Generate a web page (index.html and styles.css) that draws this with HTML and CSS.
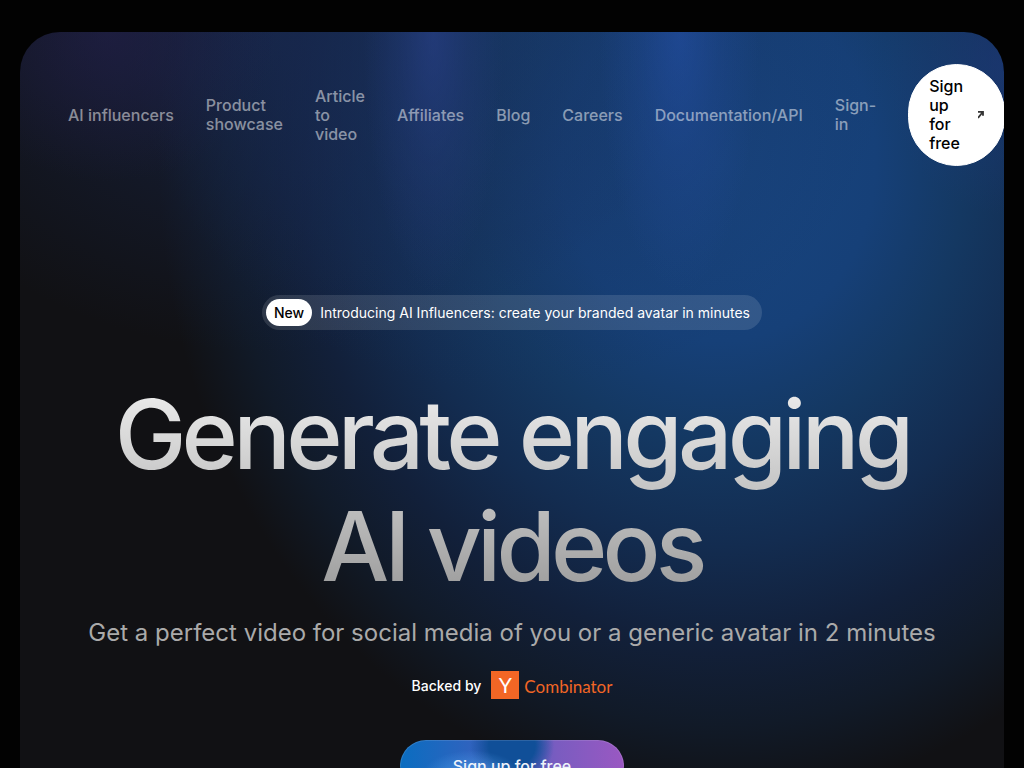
FILE: index.html
```html
<!DOCTYPE html>
<html lang="en">
<head>
  <meta charset="UTF-8">
  <meta name="viewport" content="width=device-width, initial-scale=1.0">
  <title>Generate engaging AI videos</title>
  <link rel="stylesheet" href="styles.css">
</head>
<body>
  <div class="hero">
    <nav class="nav">
      <a href="#" class="nav-link nowrap">AI influencers</a>
      <a href="#" class="nav-link">Product showcase</a>
      <a href="#" class="nav-link">Article to video</a>
      <a href="#" class="nav-link">Affiliates</a>
      <a href="#" class="nav-link">Blog</a>
      <a href="#" class="nav-link">Careers</a>
      <a href="#" class="nav-link">Documentation/API</a>
      <a href="#" class="nav-link">Sign-in</a>
      <a href="#" class="nav-signup">
        <span>Sign up for free</span>
        <svg class="arrow" width="6" height="12" viewBox="0 0 6 12" fill="none" stroke="#333" stroke-width="1.8">
          <path d="M0 2.8h5v4M5 2.8L0 9"/>
        </svg>
      </a>
    </nav>

    <main class="content">
      <a href="#" class="announce">
        <span class="badge">New</span>
        <span>Introducing AI Influencers: create your branded avatar in minutes</span>
      </a>
      <h1 class="title">Generate engaging<br>AI videos</h1>
      <p class="subtitle">Get a perfect video for social media of you or a generic avatar in 2 minutes</p>
      <div class="backed">
        <span>Backed by</span>
        <span class="yc">
          <span class="yc-mark">Y</span>
          <span class="yc-name">Combinator</span>
        </span>
      </div>
      <button type="button" class="cta">Sign up for free</button>
    </main>
  </div>
</body>
</html>
```

FILE: styles.css
```css
* {
  box-sizing: border-box;
}

body {
  margin: 0;
  padding: 32px 20px 0;
  background-color: #020202;
  color: #fff;
  font-family: Inter, sans-serif;
  font-size: 16px;
}

a {
  color: inherit;
  text-decoration: none;
}

.hero {
  overflow: hidden;
  padding-bottom: 64px;
  border-radius: 40px;
  background-color: #111114;
  background-image:
    radial-gradient(70px 260px at 42% 0, rgba(42, 65, 140, 0.6), rgba(42, 65, 140, 0.25) 50%, transparent),
    radial-gradient(80px 260px at 67% 0, rgba(35, 78, 165, 0.6), rgba(35, 78, 165, 0.25) 50%, transparent),
    radial-gradient(170px 150px at 9% 0, rgba(38, 32, 80, 0.5), transparent),
    radial-gradient(120px 150px at 100% 4%, rgba(32, 58, 130, 0.5), transparent),
    radial-gradient(420px 320px at 26% 0, rgba(24, 40, 80, 0.7), transparent),
    radial-gradient(380px 360px at 50% 0, rgba(24, 62, 112, 0.5), rgba(24, 50, 96, 0.3) 55%, transparent),
    radial-gradient(560px 640px at 71% 130px, #184580 0%, #164078 28%, #143862 44%, #132c50 60%, #12203a 75%, #111a28 88%, transparent 100%);
}

/* navigation */
.nav {
  display: flex;
  align-items: center;
  gap: 32px;
  padding: 32px 48px 0;
  font-weight: 500;
  line-height: 19px;
}

.nav-link {
  color: rgba(255, 255, 255, 0.5);
}

.nowrap {
  white-space: nowrap;
}

.nav-signup {
  display: flex;
  align-items: center;
  gap: 15px;
  padding: 12px 20px;
  border: 1px solid #fff;
  border-radius: 999px;
  background-color: #fff;
  color: #000;
}

.arrow {
  flex-shrink: 0;
}

/* hero content */
.content {
  display: flex;
  flex-direction: column;
  align-items: center;
  margin-top: 129px;
  text-align: center;
}

.announce {
  display: flex;
  align-items: center;
  gap: 8px;
  padding: 4px 12px 4px 4px;
  border-radius: 999px;
  background-color: rgba(255, 255, 255, 0.12);
  font-size: 14px;
}

.badge {
  padding: 5px 8px;
  border-radius: 999px;
  background-color: #fff;
  color: #000;
  font-weight: 500;
}

.title {
  margin: 48px 0 0;
  font-size: 96px;
  font-weight: 500;
  line-height: 112px;
  letter-spacing: -0.05em;
  background-image: linear-gradient(#f0f0f0, #999);
  -webkit-background-clip: text;
  background-clip: text;
  color: transparent;
}

.subtitle {
  margin: 16px 0 0;
  color: #aaa;
  font-size: 24px;
  line-height: 29px;
}

.backed {
  display: flex;
  align-items: center;
  gap: 10px;
  margin-top: 24px;
  font-size: 14px;
  font-weight: 500;
}

.yc {
  display: flex;
  align-items: center;
  gap: 5px;
  font-family: Lato, sans-serif;
  font-weight: 400;
}

.yc-mark {
  width: 28px;
  background-color: #f26625;
  font-size: 21px;
  line-height: 28px;
}

.yc-name {
  padding-top: 3px;
  color: #f26625;
  font-size: 17px;
}

.cta {
  margin-top: 41px;
  padding: 15px 52px;
  border: 1px solid rgba(255, 255, 255, 0.12);
  border-radius: 27px;
  background-image:
    radial-gradient(50px 26px at 32% 70%, rgba(80, 160, 235, 0.8), transparent),
    radial-gradient(42px 40px at 50% 10%, #104f98 55%, transparent),
    linear-gradient(90deg, #0a6dc0, #3f5fbe 45%, #7a5cc0 70%, #9a58c2);
  background-origin: border-box;
  color: #eef3fa;
  font: inherit;
  font-weight: 500;
}
```
